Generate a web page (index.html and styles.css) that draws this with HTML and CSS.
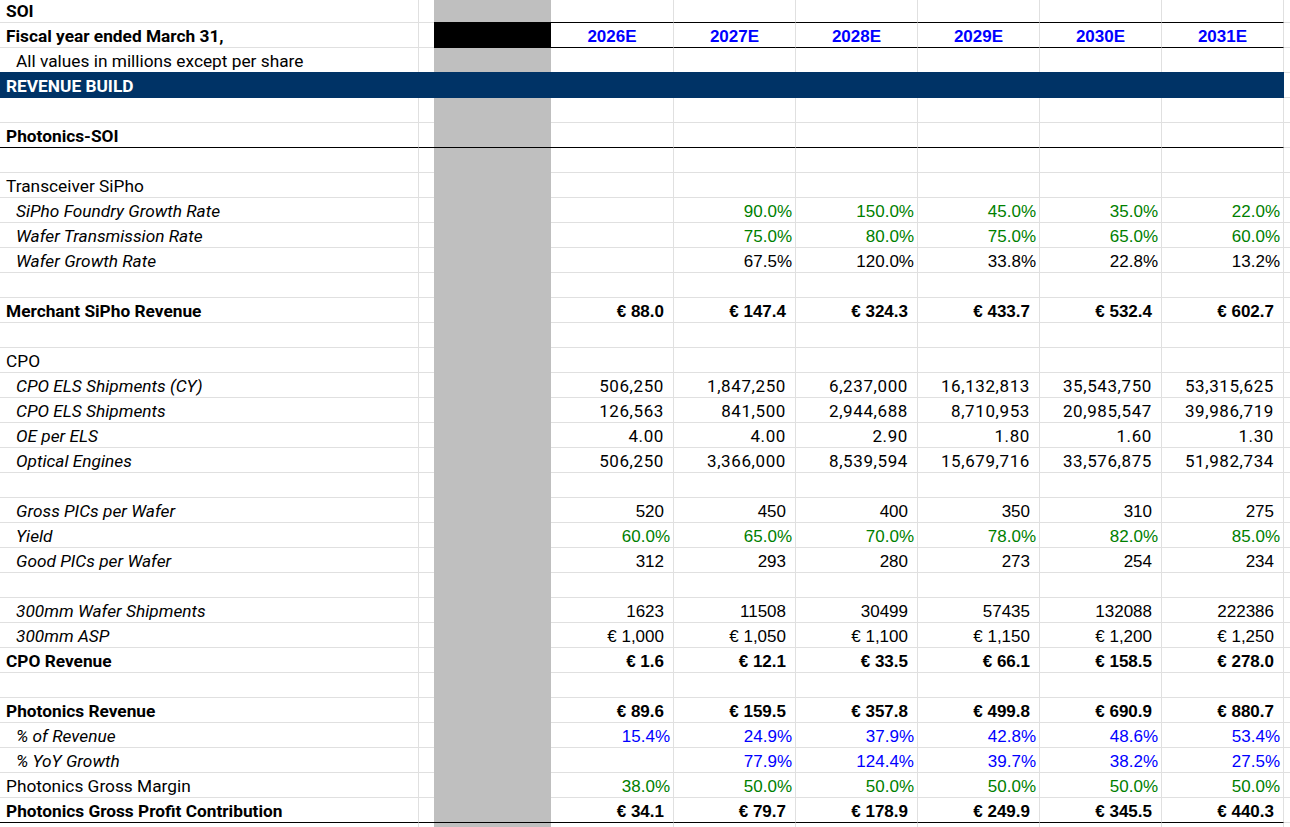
FILE: index.html
```html
<!DOCTYPE html>
<html lang="en">
<head>
<meta charset="utf-8">
<title>SOI Revenue Build</title>
<link rel="stylesheet" href="styles.css">
</head>
<body>
<div class="sheet">
  <div class="row first">
    <div class="c a b">SOI</div><div class="c sp"></div><div class="c gr top"></div>
    <div class="c y top"></div><div class="c y top"></div><div class="c y top"></div><div class="c y top"></div><div class="c y top"></div><div class="c y top"></div><div class="c e"></div>
  </div>
  <div class="row">
    <div class="c a b">Fiscal year ended March 31,</div><div class="c sp"></div><div class="c blk"></div>
    <div class="c y top">2026E</div><div class="c y top">2027E</div><div class="c y top">2028E</div><div class="c y top">2029E</div><div class="c y top">2030E</div><div class="c y top">2031E</div><div class="c e"></div>
  </div>
  <div class="row">
    <div class="c a in">All values in millions except per share</div><div class="c sp"></div><div class="c gr"></div>
    <div class="c"></div><div class="c"></div><div class="c"></div><div class="c"></div><div class="c"></div><div class="c"></div><div class="c e"></div>
  </div>
  <div class="row">
    <div class="c navy">REVENUE BUILD</div><div class="c e"></div>
  </div>
  <div class="row">
    <div class="c a"></div><div class="c sp"></div><div class="c gr"></div>
    <div class="c"></div><div class="c"></div><div class="c"></div><div class="c"></div><div class="c"></div><div class="c"></div><div class="c e"></div>
  </div>
  <div class="row rule">
    <div class="c a b">Photonics-SOI</div><div class="c sp"></div><div class="c gr"></div>
    <div class="c"></div><div class="c"></div><div class="c"></div><div class="c"></div><div class="c"></div><div class="c"></div><div class="c e"></div>
  </div>
  <div class="row">
    <div class="c a"></div><div class="c sp"></div><div class="c gr"></div>
    <div class="c"></div><div class="c"></div><div class="c"></div><div class="c"></div><div class="c"></div><div class="c"></div><div class="c e"></div>
  </div>
  <div class="row">
    <div class="c a">Transceiver SiPho</div><div class="c sp"></div><div class="c gr"></div>
    <div class="c"></div><div class="c"></div><div class="c"></div><div class="c"></div><div class="c"></div><div class="c"></div><div class="c e"></div>
  </div>
  <div class="row">
    <div class="c a in i">SiPho Foundry Growth Rate</div><div class="c sp"></div><div class="c gr"></div>
    <div class="c v p g"></div><div class="c v p g">90.0%</div><div class="c v p g">150.0%</div><div class="c v p g">45.0%</div><div class="c v p g">35.0%</div><div class="c v p g">22.0%</div><div class="c e"></div>
  </div>
  <div class="row">
    <div class="c a in i">Wafer Transmission Rate</div><div class="c sp"></div><div class="c gr"></div>
    <div class="c v p g"></div><div class="c v p g">75.0%</div><div class="c v p g">80.0%</div><div class="c v p g">75.0%</div><div class="c v p g">65.0%</div><div class="c v p g">60.0%</div><div class="c e"></div>
  </div>
  <div class="row">
    <div class="c a in i">Wafer Growth Rate</div><div class="c sp"></div><div class="c gr"></div>
    <div class="c v p"></div><div class="c v p">67.5%</div><div class="c v p">120.0%</div><div class="c v p">33.8%</div><div class="c v p">22.8%</div><div class="c v p">13.2%</div><div class="c e"></div>
  </div>
  <div class="row">
    <div class="c a"></div><div class="c sp"></div><div class="c gr"></div>
    <div class="c"></div><div class="c"></div><div class="c"></div><div class="c"></div><div class="c"></div><div class="c"></div><div class="c e"></div>
  </div>
  <div class="row">
    <div class="c a b">Merchant SiPho Revenue</div><div class="c sp"></div><div class="c gr"></div>
    <div class="c v b">€ 88.0</div><div class="c v b">€ 147.4</div><div class="c v b">€ 324.3</div><div class="c v b">€ 433.7</div><div class="c v b">€ 532.4</div><div class="c v b">€ 602.7</div><div class="c e"></div>
  </div>
  <div class="row">
    <div class="c a"></div><div class="c sp"></div><div class="c gr"></div>
    <div class="c"></div><div class="c"></div><div class="c"></div><div class="c"></div><div class="c"></div><div class="c"></div><div class="c e"></div>
  </div>
  <div class="row">
    <div class="c a">CPO</div><div class="c sp"></div><div class="c gr"></div>
    <div class="c"></div><div class="c"></div><div class="c"></div><div class="c"></div><div class="c"></div><div class="c"></div><div class="c e"></div>
  </div>
  <div class="row">
    <div class="c a in i">CPO ELS Shipments (CY)</div><div class="c sp"></div><div class="c gr"></div>
    <div class="c v n">506,250</div><div class="c v n">1,847,250</div><div class="c v n">6,237,000</div><div class="c v n">16,132,813</div><div class="c v n">35,543,750</div><div class="c v n">53,315,625</div><div class="c e"></div>
  </div>
  <div class="row">
    <div class="c a in i">CPO ELS Shipments</div><div class="c sp"></div><div class="c gr"></div>
    <div class="c v n">126,563</div><div class="c v n">841,500</div><div class="c v n">2,944,688</div><div class="c v n">8,710,953</div><div class="c v n">20,985,547</div><div class="c v n">39,986,719</div><div class="c e"></div>
  </div>
  <div class="row">
    <div class="c a in i">OE per ELS</div><div class="c sp"></div><div class="c gr"></div>
    <div class="c v n">4.00</div><div class="c v n">4.00</div><div class="c v n">2.90</div><div class="c v n">1.80</div><div class="c v n">1.60</div><div class="c v n">1.30</div><div class="c e"></div>
  </div>
  <div class="row">
    <div class="c a in i">Optical Engines</div><div class="c sp"></div><div class="c gr"></div>
    <div class="c v n">506,250</div><div class="c v n">3,366,000</div><div class="c v n">8,539,594</div><div class="c v n">15,679,716</div><div class="c v n">33,576,875</div><div class="c v n">51,982,734</div><div class="c e"></div>
  </div>
  <div class="row">
    <div class="c a"></div><div class="c sp"></div><div class="c gr"></div>
    <div class="c"></div><div class="c"></div><div class="c"></div><div class="c"></div><div class="c"></div><div class="c"></div><div class="c e"></div>
  </div>
  <div class="row">
    <div class="c a in i">Gross PICs per Wafer</div><div class="c sp"></div><div class="c gr"></div>
    <div class="c v">520</div><div class="c v">450</div><div class="c v">400</div><div class="c v">350</div><div class="c v">310</div><div class="c v">275</div><div class="c e"></div>
  </div>
  <div class="row">
    <div class="c a in i">Yield</div><div class="c sp"></div><div class="c gr"></div>
    <div class="c v p g">60.0%</div><div class="c v p g">65.0%</div><div class="c v p g">70.0%</div><div class="c v p g">78.0%</div><div class="c v p g">82.0%</div><div class="c v p g">85.0%</div><div class="c e"></div>
  </div>
  <div class="row">
    <div class="c a in i">Good PICs per Wafer</div><div class="c sp"></div><div class="c gr"></div>
    <div class="c v">312</div><div class="c v">293</div><div class="c v">280</div><div class="c v">273</div><div class="c v">254</div><div class="c v">234</div><div class="c e"></div>
  </div>
  <div class="row">
    <div class="c a"></div><div class="c sp"></div><div class="c gr"></div>
    <div class="c"></div><div class="c"></div><div class="c"></div><div class="c"></div><div class="c"></div><div class="c"></div><div class="c e"></div>
  </div>
  <div class="row">
    <div class="c a in i">300mm Wafer Shipments</div><div class="c sp"></div><div class="c gr"></div>
    <div class="c v">1623</div><div class="c v">11508</div><div class="c v">30499</div><div class="c v">57435</div><div class="c v">132088</div><div class="c v">222386</div><div class="c e"></div>
  </div>
  <div class="row">
    <div class="c a in i">300mm ASP</div><div class="c sp"></div><div class="c gr"></div>
    <div class="c v">€ 1,000</div><div class="c v">€ 1,050</div><div class="c v">€ 1,100</div><div class="c v">€ 1,150</div><div class="c v">€ 1,200</div><div class="c v">€ 1,250</div><div class="c e"></div>
  </div>
  <div class="row">
    <div class="c a b">CPO Revenue</div><div class="c sp"></div><div class="c gr"></div>
    <div class="c v b">€ 1.6</div><div class="c v b">€ 12.1</div><div class="c v b">€ 33.5</div><div class="c v b">€ 66.1</div><div class="c v b">€ 158.5</div><div class="c v b">€ 278.0</div><div class="c e"></div>
  </div>
  <div class="row">
    <div class="c a"></div><div class="c sp"></div><div class="c gr"></div>
    <div class="c"></div><div class="c"></div><div class="c"></div><div class="c"></div><div class="c"></div><div class="c"></div><div class="c e"></div>
  </div>
  <div class="row">
    <div class="c a b">Photonics Revenue</div><div class="c sp"></div><div class="c gr"></div>
    <div class="c v b">€ 89.6</div><div class="c v b">€ 159.5</div><div class="c v b">€ 357.8</div><div class="c v b">€ 499.8</div><div class="c v b">€ 690.9</div><div class="c v b">€ 880.7</div><div class="c e"></div>
  </div>
  <div class="row">
    <div class="c a in i">% of Revenue</div><div class="c sp"></div><div class="c gr"></div>
    <div class="c v p bl">15.4%</div><div class="c v p bl">24.9%</div><div class="c v p bl">37.9%</div><div class="c v p bl">42.8%</div><div class="c v p bl">48.6%</div><div class="c v p bl">53.4%</div><div class="c e"></div>
  </div>
  <div class="row">
    <div class="c a in i">% YoY Growth</div><div class="c sp"></div><div class="c gr"></div>
    <div class="c v p bl"></div><div class="c v p bl">77.9%</div><div class="c v p bl">124.4%</div><div class="c v p bl">39.7%</div><div class="c v p bl">38.2%</div><div class="c v p bl">27.5%</div><div class="c e"></div>
  </div>
  <div class="row">
    <div class="c a">Photonics Gross Margin</div><div class="c sp"></div><div class="c gr"></div>
    <div class="c v p g">38.0%</div><div class="c v p g">50.0%</div><div class="c v p g">50.0%</div><div class="c v p g">50.0%</div><div class="c v p g">50.0%</div><div class="c v p g">50.0%</div><div class="c e"></div>
  </div>
  <div class="row rule">
    <div class="c a b">Photonics Gross Profit Contribution</div><div class="c sp"></div><div class="c gr"></div>
    <div class="c v b">€ 34.1</div><div class="c v b">€ 79.7</div><div class="c v b">€ 178.9</div><div class="c v b">€ 249.9</div><div class="c v b">€ 345.5</div><div class="c v b">€ 440.3</div><div class="c e"></div>
  </div>
  <div class="row">
    <div class="c a"></div><div class="c sp"></div><div class="c gr"></div>
    <div class="c"></div><div class="c"></div><div class="c"></div><div class="c"></div><div class="c"></div><div class="c"></div><div class="c e"></div>
  </div>
</div>
</body>
</html>
```
FILE: styles.css
```css
html, body {
  margin: 0;
  padding: 0;
  background: #ffffff;
}

body {
  font-family: "Liberation Sans", Arial, sans-serif;
  font-size: 17px;
  color: #000000;
}

.sheet {
  width: 1290px;
  height: 827px;
  overflow: hidden;
}

.row {
  display: grid;
  grid-template-columns: 419px 15px 117px 123px repeat(5, 122px) 6px;
  height: 25px;
}

.row.first {
  height: 23px;
}

.c {
  box-sizing: border-box;
  display: flex;
  align-items: flex-end;
  padding: 0 0 2px 0;
  line-height: 17px;
  white-space: nowrap;
  overflow: hidden;
  border-right: 1px solid #e0e0e0;
  border-bottom: 1px solid #e0e0e0;
}

/* label column */
.a {
  font-family: Roboto, "Liberation Sans", sans-serif;
  font-size: 17.3px;
  padding-left: 6px;
}

.a.in {
  padding-left: 16px;
}

.b {
  font-weight: bold;
}

.i {
  font-style: italic;
}

/* narrow spacer column */
.sp {
  border-right: none;
}

/* grey separator column */
.gr {
  background: #bfbfbf;
  border-right: none;
  border-bottom-color: #bfbfbf;
}

.gr.top {
  border-bottom-color: #000000;
}

.blk {
  background: #000000;
  border-right: none;
  border-bottom-color: #000000;
}

/* year header cells */
.y.top {
  border-bottom-color: #000000;
}

.y {
  justify-content: center;
  color: #0000ff;
  font-weight: bold;
}

/* values */
.v {
  justify-content: flex-end;
  padding-right: 9px;
}

.v.p {
  padding-right: 3px;
}

.n {
  font-family: Roboto, "Liberation Sans", sans-serif;
  letter-spacing: 0.6px;
}

.g {
  color: #008000;
}

.bl {
  color: #0000ff;
}

/* trailing edge column */
.e {
  border-right: none;
}

/* heavy rule under a row */
.rule .c {
  border-bottom-color: #000000;
}

.rule .e {
  border-bottom-color: #e0e0e0;
}

/* section band */
.navy {
  grid-column: 1 / 10;
  background: #003366;
  color: #ffffff;
  font-family: Roboto, "Liberation Sans", sans-serif;
  font-size: 17.3px;
  font-weight: bold;
  padding-left: 6px;
  border-right: none;
  border-bottom-color: #003366;
  box-shadow: 0 -1px 0 #003366;
}
```
